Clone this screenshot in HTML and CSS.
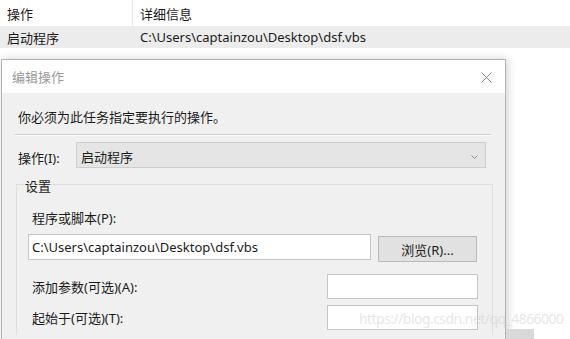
FILE: index.html
```html
<!DOCTYPE html>
<html lang="zh-CN">
<head>
<meta charset="utf-8">
<title>编辑操作</title>
<link rel="stylesheet" href="styles.css">
</head>
<body>
<div class="tbl">
  <div class="thead">
    <div class="col1 divided">操作</div>
    <div class="col2">详细信息</div>
  </div>
  <div class="trow">
    <div class="col1">启动程序</div>
    <div class="col2">C:\Users\captainzou\Desktop\dsf.vbs</div>
  </div>
</div>

<div class="dialog">
  <div class="titlebar">
    <span class="title">编辑操作</span>
    <svg class="close" width="11" height="11" viewBox="0 0 11 11"><path d="M0.5 0.5 L10.5 10.5 M10.5 0.5 L0.5 10.5" stroke="#8a8a8a" stroke-width="1" fill="none"/></svg>
  </div>
  <div class="dbody">
    <div class="intro">你必须为此任务指定要执行的操作。</div>
    <div class="sep"></div>
    <div class="action-row">
      <span class="action-label">操作(I):</span>
      <div class="combo">
        <span>启动程序</span>
        <svg class="chev" width="7" height="4" viewBox="0 0 7 4"><path d="M0.5 0.5 L3.5 3.5 L6.5 0.5" stroke="#8a8a8a" stroke-width="1" fill="none"/></svg>
      </div>
    </div>
    <div class="group">
      <div class="group-title">设置</div>
      <div class="field-label">程序或脚本(P):</div>
      <div class="prog-row">
        <div class="input wide">C:\Users\captainzou\Desktop\dsf.vbs</div>
        <div class="btn">浏览(R)...</div>
      </div>
      <div class="opt-row first">
        <span class="opt-label">添加参数(可选)(A):</span>
        <div class="input short"></div>
      </div>
      <div class="opt-row">
        <span class="opt-label">起始于(可选)(T):</span>
        <div class="input short"></div>
      </div>
    </div>
  </div>
</div>

<div class="scrollbit"></div>
<div class="watermark">https://blog.csdn.net/qq_4866000</div>
</body>
</html>
```

FILE: styles.css
```css
html, body {
  margin: 0;
  padding: 0;
}
body {
  width: 570px;
  height: 339px;
  overflow: hidden;
  position: relative;
  background: #ffffff;
  font-family: "Noto Sans", "Noto Sans CJK SC", sans-serif;
  font-size: 13px;
  color: #1b1b1b;
}

/* underlying table */
.thead, .trow {
  display: flex;
  align-items: center;
}
.thead {
  height: 26px;
}
.trow {
  height: 22px;
  background: #ececec;
}
.col1 {
  width: 133px;
  box-sizing: border-box;
  padding-left: 7px;
  height: 100%;
  display: flex;
  align-items: center;
}
.col1.divided {
  border-right: 1px solid #e8e8e8;
}
.col2 {
  padding-left: 7px;
}

/* dialog */
.dialog {
  margin: 11px 0 0 1px;
  width: 505px;
  height: 280px;
  overflow: hidden;
  box-sizing: border-box;
  border: 1px solid #b3b3b3;
  border-bottom: none;
  background: #f0f0f0;
  box-shadow: 2px 0 8px rgba(0, 0, 0, 0.18);
}
.titlebar {
  height: 33px;
  background: #ffffff;
  display: flex;
  align-items: center;
  justify-content: space-between;
  padding: 0 13px 0 10px;
}
.title {
  color: #9a9a9a;
}
.close {
  display: block;
  margin-top: 2px;
}
.dbody {
  padding: 0 14px 0 13px;
}
.intro {
  margin-top: 14px;
  line-height: 20px;
  padding-left: 3px;
}
.sep {
  margin-top: 7px;
  height: 0;
  border-top: 1px solid #cfcfcf;
  border-bottom: 1px solid #fbfbfb;
}
.action-row {
  margin-top: 6px;
  display: flex;
  align-items: center;
  height: 26px;
}
.action-label {
  width: 58px;
  padding-left: 3px;
  margin-top: 4px;
}
.combo {
  width: 410px;
  height: 26px;
  box-sizing: border-box;
  background: #e5e5e5;
  border: 1px solid #cdcdcd;
  display: flex;
  align-items: center;
  justify-content: space-between;
  padding: 3px 7px 0 4px;
}
.chev {
  display: block;
}

.group {
  margin: 16px -2px 0 1px;
  border: 1px solid #dedede;
  border-bottom: none;
  height: 150px;
  padding-left: 15px;
}
.group-title {
  margin: -8px 0 0 -7px;
  line-height: 18px;
  width: 30px;
}
.field-label {
  margin-top: 14px;
  line-height: 18px;
}
.prog-row {
  margin-top: 7px;
  margin-left: -4px;
  display: flex;
  align-items: flex-start;
}
.input {
  box-sizing: border-box;
  background: #ffffff;
  border: 1px solid #c6c6c6;
  display: flex;
  align-items: center;
  padding-left: 3px;
}
.input.wide {
  width: 343px;
  height: 26px;
}
.btn {
  margin: 2px 0 0 7px;
  width: 99px;
  height: 26px;
  box-sizing: border-box;
  background: #e1e1e1;
  border: 1px solid #b9b9b9;
  display: flex;
  align-items: center;
  justify-content: center;
}
.opt-row {
  margin-top: 6px;
  width: 446px;
  display: flex;
  align-items: center;
  justify-content: space-between;
}
.opt-row.first {
  margin-top: 12px;
}
.input.short {
  width: 151px;
  height: 25px;
}

/* overlays */
.scrollbit {
  position: absolute;
  left: 506px;
  top: 329px;
  width: 28px;
  height: 10px;
  background: #d9d9d9;
}
.watermark {
  position: absolute;
  left: 359px;
  top: 309px;
  font-size: 14px;
  letter-spacing: -0.55px;
  line-height: 20px;
  color: rgba(200, 200, 200, 0.45);
  white-space: nowrap;
  font-family: "Noto Sans", sans-serif;
}
```
